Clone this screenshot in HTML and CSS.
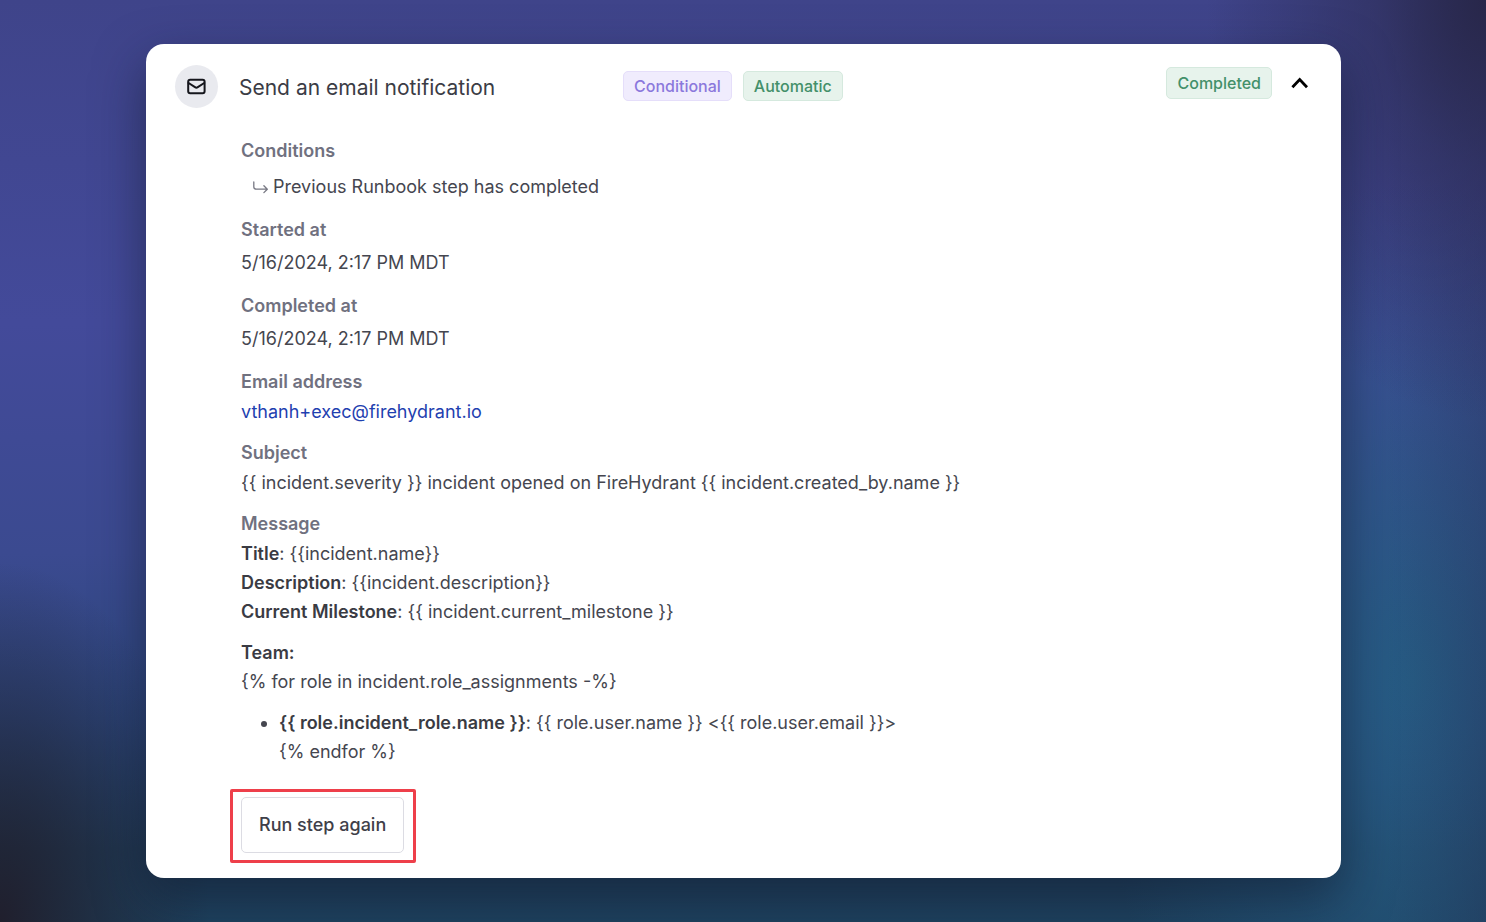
FILE: index.html
```html
<!DOCTYPE html>
<html lang="en">
<head>
<meta charset="utf-8">
<meta name="viewport" content="width=device-width, initial-scale=1">
<title>Runbook step</title>
<link rel="stylesheet" href="styles.css">
</head>
<body>
<main class="card">
  <header class="step-header">
    <span class="step-icon">
      <svg width="20" height="18" viewBox="0 0 20 18" fill="none" stroke="currentColor" stroke-width="2" stroke-linecap="round" stroke-linejoin="round" aria-hidden="true">
        <rect x="1.2" y="1.8" width="16.4" height="13.4" rx="2"/>
        <path d="M1.6 5 8 9.2Q9.4 10.1 10.8 9.2L17.2 5"/>
      </svg>
    </span>
    <h1 class="step-title">Send an email notification</h1>
    <div class="tags">
      <span class="badge badge-purple">Conditional</span>
      <span class="badge badge-green">Automatic</span>
    </div>
    <div class="status">
      <span class="badge badge-green badge-status">Completed</span>
      <button class="toggle" type="button" aria-label="Collapse step" aria-expanded="true">
        <svg width="20" height="14" viewBox="0 0 20 14" fill="none" stroke="currentColor" stroke-width="2.8" stroke-linejoin="miter" aria-hidden="true">
          <path d="M2.4 11.2 9.7 3.6 17 11.2"/>
        </svg>
      </button>
    </div>
  </header>

  <section class="details">
    <dl class="fields">
      <div class="field field-conditions">
        <dt>Conditions</dt>
        <dd>
          <svg class="branch" width="17" height="14" viewBox="0 0 17 14" fill="none" stroke="currentColor" stroke-width="1.3" stroke-linecap="round" stroke-linejoin="round" aria-hidden="true">
            <path d="M1.8 2V6.8Q1.8 9.2 4.2 9.2H15M11.9 5.8 15.3 9.2 11.9 12.6"/>
          </svg>
          <span>Previous Runbook step has completed</span>
        </dd>
      </div>
      <div class="field field-time">
        <dt>Started at</dt>
        <dd>5/16/2024, 2:17 PM MDT</dd>
      </div>
      <div class="field field-time">
        <dt>Completed at</dt>
        <dd>5/16/2024, 2:17 PM MDT</dd>
      </div>
      <div class="field">
        <dt>Email address</dt>
        <dd><a class="email" href="mailto:vthanh+exec@firehydrant.io">vthanh+exec@firehydrant.io</a></dd>
      </div>
      <div class="field">
        <dt>Subject</dt>
        <dd>{{ incident.severity }} incident opened on FireHydrant {{ incident.created_by.name }}</dd>
      </div>
      <div class="field">
        <dt>Message</dt>
        <dd class="message">
          <p><strong>Title</strong>: {{incident.name}}<br>
          <strong>Description</strong>: {{incident.description}}<br>
          <strong>Current Milestone</strong>: {{ incident.current_milestone }}</p>
          <p><strong>Team:</strong><br>
          {% for role in incident.role_assignments -%}</p>
          <ul>
            <li><strong>{{ role.incident_role.name }}</strong>: {{ role.user.name }} &lt;{{ role.user.email }}&gt;<br>
            {% endfor %}</li>
          </ul>
        </dd>
      </div>
    </dl>
    <div class="highlight">
      <button class="run-again" type="button">Run step again</button>
    </div>
  </section>
</main>
</body>
</html>
```

FILE: styles.css
```css
* {
  box-sizing: border-box;
}

body {
  margin: 0;
  min-height: 100vh;
  padding: 44px 145px 44px 146px;
  font-family: Inter, "Liberation Sans", sans-serif;
  font-size: 18px;
  line-height: 29px;
  color: #45464f;
  background:
    radial-gradient(ellipse 280px 420px at 100% 0%, #28274a 0, rgba(40, 39, 74, 0.5) 40%, rgba(40, 39, 74, 0) 100%),
    radial-gradient(ellipse 210px 360px at 0% 100%, #201f2d 0, rgba(32, 31, 45, 0.6) 40%, rgba(32, 31, 45, 0) 100%),
    linear-gradient(270deg, rgba(35, 40, 75, 0.3) 0, rgba(35, 40, 75, 0) 100px),
    radial-gradient(ellipse 320px 500px at 95% 74%, #265c84 0, rgba(38, 92, 132, 0.6) 40%, rgba(38, 92, 132, 0) 100%),
    linear-gradient(180deg, #3f448a 0, #434a9a 35%, #3b4a90 60%, #2c467c 78%, #20405f 92%, #1e425f 100%);
}

h1, p, ul, dl, dd {
  margin: 0;
}

.card {
  background: #fff;
  border-radius: 18px;
  padding: 21px 29px 15px;
  box-shadow: 0 20px 50px rgba(16, 24, 42, 0.55);
}

.step-header {
  display: flex;
  align-items: center;
}

.step-icon {
  display: grid;
  place-items: center;
  width: 43px;
  height: 43px;
  margin-right: 21px;
  border-radius: 50%;
  background: #e9eaef;
  color: #15161c;
}

.step-title {
  flex: 0 1 384px;
  padding-top: 2px;
  font-size: 21px;
  font-weight: 400;
  color: #3b3c45;
}

.tags {
  display: flex;
  gap: 11px;
  padding-bottom: 2px;
}

.badge {
  padding: 0 10px;
  border: 1px solid;
  border-radius: 5px;
  font-size: 16px;
  font-weight: 500;
  line-height: 28px;
}

.badge-purple {
  color: #8b78dc;
  background: #f0ecfd;
  border-color: #e5defa;
}

.badge-green {
  color: #43906a;
  background: #e7f3ec;
  border-color: #d5e9de;
}

.badge-status {
  line-height: 30px;
}

.status {
  display: flex;
  align-items: center;
  align-self: flex-start;
  gap: 18px;
  margin-left: auto;
  padding-top: 2px;
}

.toggle {
  display: grid;
  padding: 0;
  margin-right: 2px;
  border: 0;
  background: none;
  color: #000;
}

.details {
  padding: 28px 0 0 66px;
}

.field {
  margin-bottom: 12px;
}

.field dt {
  font-weight: 600;
  color: #70717f;
}

.field dd {
  padding-top: 1px;
}

.field-conditions,
.field-time {
  margin-bottom: 14px;
}

.field-conditions dd {
  display: flex;
  align-items: center;
  gap: 4px;
  padding: 7px 0 0 11px;
}

.branch {
  color: #777883;
}

.field-time dd {
  padding-top: 4px;
}

.email {
  color: #1f3fb0;
  text-decoration: none;
}

.message p {
  margin-bottom: 12px;
}

.message strong {
  font-weight: 600;
  color: #3a3b43;
}

.message ul {
  padding-left: 38px;
}

.highlight {
  width: fit-content;
  margin: 23px 0 0 -11px;
  padding: 5px 9px 7px 8px;
  border: 3px solid #ee3f4a;
  border-radius: 2px;
}

.run-again {
  display: block;
  padding: 12px 17px;
  border: 1px solid #dcdce3;
  border-radius: 5px;
  background: #fff;
  color: #3f4049;
  font: inherit;
  font-weight: 500;
  line-height: 30px;
}
```
